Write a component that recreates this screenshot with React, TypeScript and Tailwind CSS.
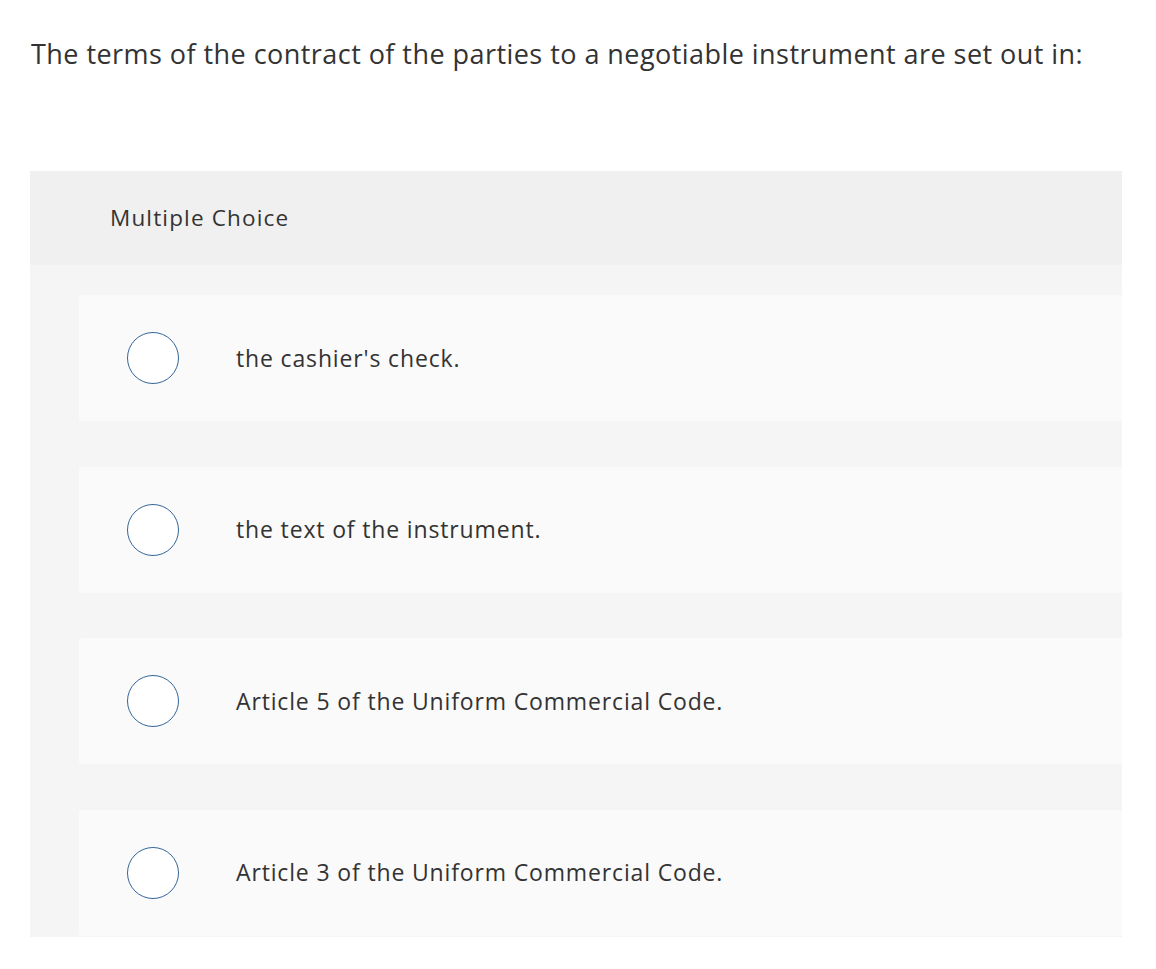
import React from "react";

const options = [
  "the cashier's check.",
  "the text of the instrument.",
  "Article 5 of the Uniform Commercial Code.",
  "Article 3 of the Uniform Commercial Code.",
];

export default function App() {
  return (
    <div
      className="w-[1156px] h-[969px] bg-white overflow-hidden"
      style={{ fontFamily: "'Open Sans', Lato, sans-serif" }}
    >
      <div className="pl-[31px] pt-[36px] h-[171px] text-[27px] leading-[36px] tracking-[0.45px] text-[#333333]">
        The terms of the contract of the parties to a negotiable instrument are set out in:
      </div>
      <div className="ml-[30px] w-[1092px] bg-[#f5f5f5] pb-[1px]">
        <div className="h-[94px] bg-[#f0f0f0] flex items-center pl-[80px] text-[22.5px] tracking-[1.15px] text-[#333333]">
          Multiple Choice
        </div>
        <div className="pt-[30px] pl-[49px] flex flex-col gap-[45.5px]">
          {options.map((o) => (
            <div
              key={o}
              className="h-[126px] bg-[#fafafa] rounded-l-[3px] flex items-center pl-[48px]"
            >
              <div className="w-[52px] h-[52px] rounded-full border-[1.6px] border-[#34669a] bg-white shrink-0" />
              <div className="ml-[57px] text-[23px] tracking-[0.85px] text-[#333333]">{o}</div>
            </div>
          ))}
        </div>
      </div>
    </div>
  );
}
